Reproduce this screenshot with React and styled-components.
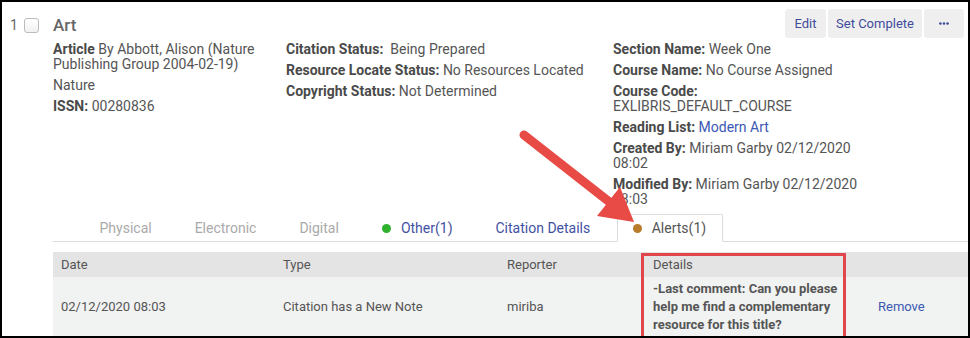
import React from "react";
import styled, { createGlobalStyle } from "styled-components";

const Global = createGlobalStyle`
  html, body { margin: 0; padding: 0; background: #fff; }
  body { font-family: Roboto, "Liberation Sans", Arial, sans-serif; }
`;

const Frame = styled.div`
  position: relative;
  width: 970px;
  height: 338px;
  box-sizing: border-box;
  border: 2px solid #000;
  overflow: hidden;
  background: #fff;
  display: flex;
  color: #555;
  font-size: 14px;
`;

const Lead = styled.div`
  flex: none;
  width: 51px;
  height: 30px;
  margin-top: 8px;
  box-sizing: border-box;
  padding-left: 8px;
  display: flex;
  align-items: center;
  gap: 6px;
  color: #666;
  font-size: 14px;
`;

const Checkbox = styled.span`
  width: 15px;
  height: 15px;
  box-sizing: border-box;
  border: 1px solid #bcbcbc;
  border-radius: 3px;
  background: linear-gradient(#fff, #f1f1f1);
`;

const Main = styled.div`
  flex: 1;
  min-width: 0;
  display: flex;
  flex-direction: column;
`;

const HeaderRow = styled.div`
  display: flex;
  justify-content: space-between;
  align-items: center;
  padding: 7px 4px 0 0;
`;

const Title = styled.div`
  font-size: 17px;
  font-weight: 500;
  color: #666;
  padding-top: 3px;
`;

const ButtonGroup = styled.div`
  display: flex;
  gap: 2px;
`;

const Button = styled.button`
  height: 29px;
  width: ${(p) => p.$w}px;
  padding: 0;
  border: none;
  border-radius: 3px;
  background: #efefef;
  color: #3f4c9c;
  font-family: Roboto, "Liberation Sans", Arial, sans-serif;
  font-size: 13px;
  display: flex;
  align-items: center;
  justify-content: center;
  white-space: nowrap;
`;

const DetailsGrid = styled.div`
  display: grid;
  grid-template-columns: 233px 327px 1fr;
  margin-top: 4px;
`;

const Column = styled.div`
  display: flex;
  flex-direction: column;
  gap: 6px;
  max-width: ${(p) => p.$max}px;
  line-height: 15px;
`;

const Item = styled.div``;

const Label = styled.b`
  font-weight: 700;
  color: #4a4a4a;
`;

const Link = styled.span`
  color: #3b58b3;
`;

const TabBar = styled.div`
  display: flex;
  align-items: flex-end;
  height: 26px;
  margin-top: 8px;
  padding-left: 25px;
  border-bottom: 1px solid #dcdcdc;
`;

const Tab = styled.div`
  height: 26px;
  display: flex;
  align-items: center;
  padding: 0 21.5px;
  color: ${(p) => (p.$link ? "#3f51a3" : "#aaa")};
  white-space: nowrap;
`;

const ActiveTab = styled.div`
  height: 26px;
  margin-left: 5px;
  margin-bottom: -1px;
  display: flex;
  align-items: center;
  padding: 0 16px 0 15px;
  border: 1px solid #dcdcdc;
  border-bottom: 1px solid #fff;
  border-radius: 2px 2px 0 0;
  background: #fff;
  color: #555;
`;

const Dot = styled.span`
  width: 9px;
  height: 9px;
  border-radius: 50%;
  background: ${(p) => p.$color};
  margin-right: ${(p) => p.$gap}px;
`;

const Table = styled.div`
  margin-top: 10px;
  display: grid;
  grid-template-columns: 222px 224px 146px 225px 1fr;
  font-size: 13px;
`;

const HeadCell = styled.div`
  height: 25px;
  display: flex;
  align-items: center;
  padding: 0 8px;
  background: #e4e4e4;
  color: #555;
`;

const Cell = styled.div`
  display: flex;
  align-items: center;
  padding: 3px 8px;
  background: #f1f2f2;
  line-height: 18px;
  color: ${(p) => (p.$link ? "#3b58b3" : "#555")};
  font-weight: ${(p) => (p.$bold ? 700 : 400)};
`;

const Highlight = styled.div`
  position: absolute;
  left: 639px;
  top: 251px;
  width: 205px;
  height: 110px;
  box-sizing: border-box;
  border: 3px solid #e0464b;
  pointer-events: none;
`;

const ArrowLayer = styled.svg`
  position: absolute;
  left: -2px;
  top: -2px;
  width: 970px;
  height: 338px;
  pointer-events: none;
`;

function Dots() {
  return (
    <svg width="10" height="3" viewBox="0 0 10 3">
      <circle cx="1.4" cy="1.5" r="1.3" fill="#3f4c9c" />
      <circle cx="5" cy="1.5" r="1.3" fill="#3f4c9c" />
      <circle cx="8.6" cy="1.5" r="1.3" fill="#3f4c9c" />
    </svg>
  );
}

export default function App() {
  return (
    <>
      <Global />
      <Frame>
        <Lead>
          <span>1</span>
          <Checkbox />
        </Lead>
        <Main>
          <HeaderRow>
            <Title>Art</Title>
            <ButtonGroup>
              <Button $w={41}>Edit</Button>
              <Button $w={94}>Set Complete</Button>
              <Button $w={40}>
                <Dots />
              </Button>
            </ButtonGroup>
          </HeaderRow>
          <DetailsGrid>
            <Column $max={212}>
              <Item>
                <Label>Article</Label> By Abbott, Alison (Nature Publishing Group 2004-02-19)
              </Item>
              <Item>Nature</Item>
              <Item>
                <Label>ISSN:</Label> 00280836
              </Item>
            </Column>
            <Column $max={327}>
              <Item>
                <Label>Citation Status:</Label>&nbsp; Being Prepared
              </Item>
              <Item>
                <Label>Resource Locate Status:</Label> No Resources Located
              </Item>
              <Item>
                <Label>Copyright Status:</Label> Not Determined
              </Item>
            </Column>
            <Column $max={250}>
              <Item>
                <Label>Section Name:</Label> Week One
              </Item>
              <Item>
                <Label>Course Name:</Label> No Course Assigned
              </Item>
              <Item>
                <Label>Course Code:</Label> EXLIBRIS_DEFAULT_COURSE
              </Item>
              <Item>
                <Label>Reading List:</Label> <Link>Modern Art</Link>
              </Item>
              <Item>
                <Label>Created By:</Label> Miriam Garby 02/12/2020 08:02
              </Item>
              <Item>
                <Label>Modified By:</Label> Miriam Garby 02/12/2020 08:03
              </Item>
            </Column>
          </DetailsGrid>
          <TabBar>
            <Tab>Physical</Tab>
            <Tab>Electronic</Tab>
            <Tab>Digital</Tab>
            <Tab $link>
              <Dot $color="#2fb32f" $gap={10} />
              Other(1)
            </Tab>
            <Tab $link>Citation Details</Tab>
            <ActiveTab>
              <Dot $color="#b97b2c" $gap={10} />
              Alerts(1)
            </ActiveTab>
          </TabBar>
          <Table>
            <HeadCell>Date</HeadCell>
            <HeadCell>Type</HeadCell>
            <HeadCell>Reporter</HeadCell>
            <HeadCell>Details</HeadCell>
            <HeadCell />
            <Cell>02/12/2020 08:03</Cell>
            <Cell>Citation has a New Note</Cell>
            <Cell>miriba</Cell>
            <Cell $bold>-Last comment: Can you please help me find a complementary resource for this title?</Cell>
            <Cell $link>Remove</Cell>
          </Table>
        </Main>
        <Highlight />
        <ArrowLayer viewBox="0 0 970 338">
          <line x1="524" y1="135" x2="612" y2="204" stroke="#e84a45" strokeWidth="9" strokeLinecap="round" />
          <polygon points="634,222 597,216 620,187" fill="#e84a45" />
        </ArrowLayer>
      </Frame>
    </>
  );
}
